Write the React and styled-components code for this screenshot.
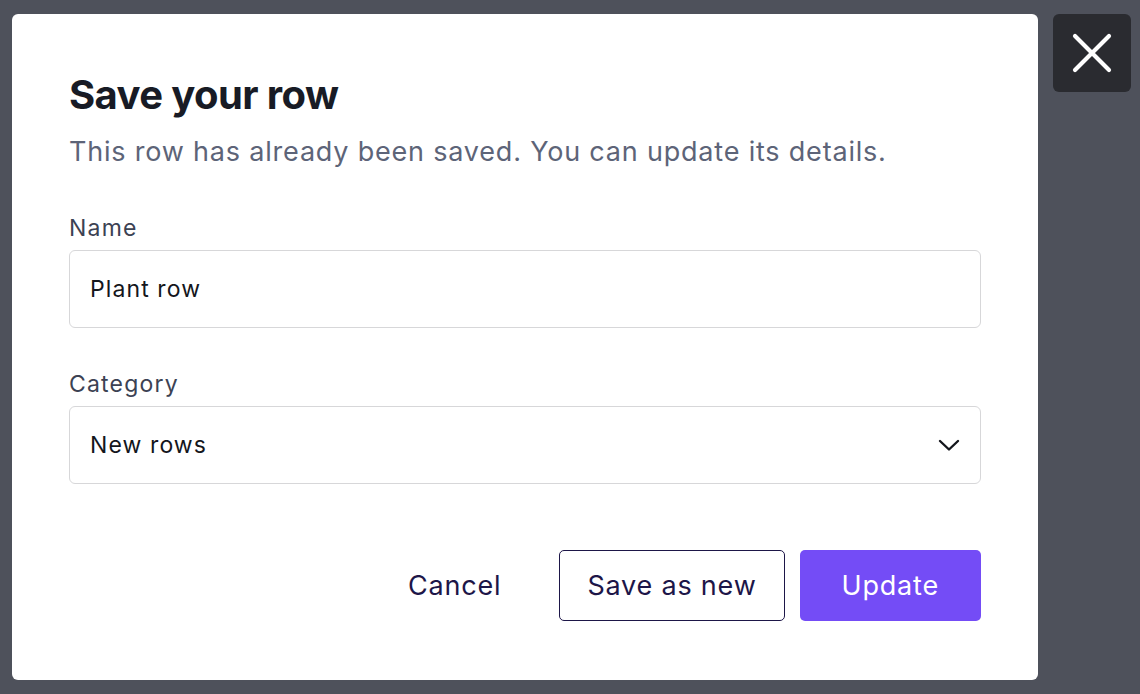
import React from 'react'
import styled, { createGlobalStyle } from 'styled-components';

const GlobalStyle = createGlobalStyle`
  html, body {
    margin: 0;
    padding: 0;
    background: #4e515b;
    font-family: Inter, "Noto Sans", sans-serif;
  }
`

const Overlay = styled.div`
  width: 1140px;
  height: 694px;
  box-sizing: border-box;
  padding: 14px 0 0 12px;
  display: flex;
  align-items: flex-start;
  gap: 15px;
  background: #4e515b;
`

const Modal = styled.div`
  width: 1026px;
  height: 666px;
  box-sizing: border-box;
  padding: 57px 57px 59px;
  background: #fff;
  border-radius: 6px;
  display: flex;
  flex-direction: column;
`

const CloseButton = styled.button`
  width: 78px;
  height: 78px;
  border: none;
  border-radius: 6px;
  background: #2a2b30;
  display: flex;
  align-items: center;
  justify-content: center;
  padding: 0;
  cursor: pointer;
`

const Title = styled.h2`
  margin: 0;
  font-size: 40px;
  line-height: 48px;
  font-weight: 700;
  color: #181b25;
  letter-spacing: -0.6px;
`

const Subtitle = styled.p`
  margin: 17px 0 0;
  font-size: 27px;
  line-height: 31px;
  letter-spacing: 0.8px;
  color: #5d6478;
`

const Field = styled.div`
  display: flex;
  flex-direction: column;
  gap: 8px;
  margin-top: ${p => p.$top}px;
`

const Label = styled.label`
  font-size: 23px;
  line-height: 28px;
  letter-spacing: 1.2px;
  color: #3c4253;
`

const Box = styled.div`
  height: 78px;
  box-sizing: border-box;
  border: 1px solid #d7d7d9;
  border-radius: 6px;
  padding: 0 20px;
  display: flex;
  align-items: center;
  justify-content: space-between;
  font-size: 23px;
  letter-spacing: 1.1px;
  color: #14161c;
`

const Actions = styled.div`
  margin-top: auto;
  display: flex;
  justify-content: flex-end;
  align-items: center;
  gap: 15px;
`

const Button = styled.button`
  height: 71px;
  box-sizing: border-box;
  border-radius: 5px;
  font-family: inherit;
  font-size: 27px;
  letter-spacing: 0.8px;
  padding: 0 ${p => p.$pad}px;
  cursor: pointer;
  border: 1px solid transparent;
  background: transparent;
  color: #1d1648;
  ${p => p.$variant === 'outline' && `
    border-color: #1d1648;
    background: #fff;
  `}
  ${p => p.$variant === 'primary' && `
    background: #744cf6;
    color: #fff;
  `}
`

function Chevron() {
  return (
    <svg width="22" height="14" viewBox="0 0 22 14" fill="none">
      <path d="M2 3l9 8.5L20 3" stroke="#14161c" strokeWidth="2.4" strokeLinecap="round" strokeLinejoin="round" />
    </svg>
  );
}

function CloseIcon() {
  return (
    <svg width="40" height="40" viewBox="0 0 40 40" fill="none">
      <path d="M3 3L37 37M37 3L3 37" stroke="#fff" strokeWidth="4.2" strokeLinecap="round" />
    </svg>
  );
}

export default function App() {
  return (
    <>
      <GlobalStyle />
      <Overlay>
        <Modal>
          <Title>Save your row</Title>
          <Subtitle>This row has already been saved. You can update its details.</Subtitle>
          <Field $top={47}>
            <Label>Name</Label>
            <Box>Plant row</Box>
          </Field>
          <Field $top={42}>
            <Label>Category</Label>
            <Box>
              New rows
              <Chevron />
            </Box>
          </Field>
          <Actions>
            <Button $pad={42}>Cancel</Button>
            <Button $variant="outline" $pad={27}>Save as new</Button>
            <Button $variant="primary" $pad={41}>Update</Button>
          </Actions>
        </Modal>
        <CloseButton aria-label="Close">
          <CloseIcon />
        </CloseButton>
      </Overlay>
    </>
  );
}
